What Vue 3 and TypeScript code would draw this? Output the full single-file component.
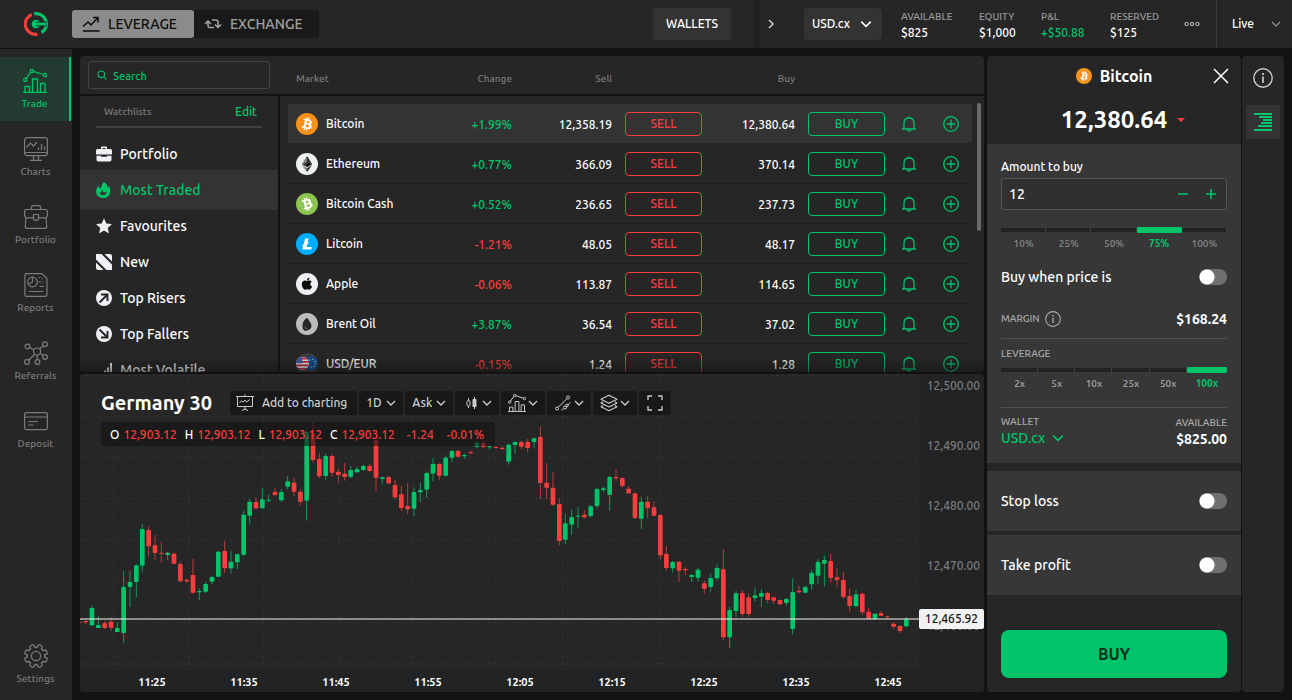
<script setup lang="ts">
import { ref } from 'vue'

interface Market {
  name: string
  icon: string
  change: string
  sell: string
  buy: string
}

const nav = [
  { label: 'Trade', icon: 'i-trade' },
  { label: 'Charts', icon: 'i-charts' },
  { label: 'Portfolio', icon: 'i-case' },
  { label: 'Reports', icon: 'i-reports' },
  { label: 'Referrals', icon: 'i-referrals' },
  { label: 'Deposit', icon: 'i-deposit' },
]
const activeNav = ref('Trade')

const stats = [
  { label: 'AVAILABLE', value: '$825' },
  { label: 'EQUITY', value: '$1,000' },
  { label: 'P&L', value: '+$50.88', up: true },
  { label: 'RESERVED', value: '$125' },
]

const watchlists = [
  { label: 'Portfolio', icon: 'w-case' },
  { label: 'Most Traded', icon: 'w-fire' },
  { label: 'Favourites', icon: 'w-star' },
  { label: 'New', icon: 'w-new' },
  { label: 'Top Risers', icon: 'w-up' },
  { label: 'Top Fallers', icon: 'w-down' },
  { label: 'Most Volatile', icon: 'w-bars' },
]
const activeList = ref('Most Traded')

const markets: Market[] = [
  { name: 'Bitcoin', icon: 'c-btc', change: '+1.99%', sell: '12,358.19', buy: '12,380.64' },
  { name: 'Ethereum', icon: 'c-eth', change: '+0.77%', sell: '366.09', buy: '370.14' },
  { name: 'Bitcoin Cash', icon: 'c-bch', change: '+0.52%', sell: '236.65', buy: '237.73' },
  { name: 'Litcoin', icon: 'c-ltc', change: '-1.21%', sell: '48.05', buy: '48.17' },
  { name: 'Apple', icon: 'c-apple', change: '-0.06%', sell: '113.87', buy: '114.65' },
  { name: 'Brent Oil', icon: 'c-oil', change: '+3.87%', sell: '36.54', buy: '37.02' },
  { name: 'USD/EUR', icon: 'c-fx', change: '-0.15%', sell: '1.24', buy: '1.28' },
]
const activeMarket = ref('Bitcoin')

const tools = [
  { label: 'Chart type', icon: 't-candles' },
  { label: 'Indicators', icon: 't-indicators' },
  { label: 'Drawing tools', icon: 't-draw' },
  { label: 'Layers', icon: 't-layers' },
]

const quotes = [
  { key: 'O', value: '12,903.12' },
  { key: 'H', value: '12,903.12' },
  { key: 'L', value: '12,903.12' },
  { key: 'C', value: '12,903.12' },
]

const times = ['11:25', '11:35', '11:45', '11:55', '12:05', '12:15', '12:25', '12:35', '12:45']
const prices = ['12,500.00', '12,490.00', '12,480.00', '12,470.00', '12,460.00']

const gridX = [102, 326, 551, 775, 1000, 1224, 1448, 1741]
const gridY = [15, 139, 263, 386, 510, 634, 758, 881]

// Each entry: direction, high, body top, body bottom, low
const series = `
r750,753,757,762 g706,714,766,768 g738,765,774,774 r752,760,774,777 r743,755,773,783 g757,774,786,786
g603,651,789,820 g603,636,651,711 g583,586,636,682 g462,477,587,605 r468,480,529,560 r495,526,549,571
r515,548,551,578 g545,548,555,570 r548,551,581,583 r575,582,633,638 r625,630,634,639 r567,615,668,671
g655,663,667,690 g636,642,665,669 g618,621,635,642 g542,545,620,621 r513,543,595,609 g544,575,595,611
g550,553,577,597 g421,434,555,557 g387,395,437,461 r383,396,415,417 g353,388,415,416 g374,389,392,396
r353,366,375,377 g357,366,391,395 g318,334,350,358 r323,338,365,378 r358,365,395,407 g181,186,392,452
r156,190,270,278 r248,267,319,325 g250,258,318,329 r252,258,308,320 r295,305,315,338 r279,311,321,332
g288,300,321,325 g290,297,307,308 g284,288,300,303 r282,288,303,305 r205,211,323,365 g319,322,327,343
r318,321,340,342 r330,345,382,388 r348,373,414,423 r339,408,418,432 g352,366,416,438 g338,360,367,396
g304,309,359,383 g265,282,311,333 r278,282,317,330 g256,263,317,321 g241,243,263,277 r239,243,260,262
g251,255,259,266 r242,246,250,251 g213,218,230,234 r212,218,231,233 g224,229,232,239 r228,231,234,236
r229,233,237,240 g221,224,275,284 g214,216,225,251 r212,216,230,237 r207,216,234,246 g203,205,216,235
r169,201,339,387 r279,338,353,387 r306,353,404,408 r384,402,513,526 g430,460,509,522 g418,441,464,494
g411,437,440,474 r420,434,442,446 g405,409,438,443 g353,357,408,415 g350,355,360,368 g318,321,375,422
r299,321,325,333 r321,324,348,353 r348,356,370,372 r368,370,444,447 g380,395,446,477 r378,395,414,446
r393,412,437,439 r433,435,556,569 r527,552,594,603 g573,576,595,607 r573,575,602,636 r592,597,601,616
g612,615,621,636 g594,599,623,633 r632,640,656,671 g611,624,651,665 g583,594,625,631 r537,598,802,811
g710,720,802,834 g663,670,723,741 r660,669,732,740 r670,682,732,740 g652,676,684,694 g657,669,680,711
r665,669,690,700 r681,682,692,701 r688,690,703,705 g684,687,699,708 g625,666,777,794 r647,662,667,670
g648,651,668,671 g600,608,643,659 g567,576,617,641 g558,570,581,651 r551,573,624,638 r594,622,630,652
r606,630,681,686 r655,678,708,725 g659,673,709,711 r669,671,727,734 r712,725,746,748 g729,731,747,749
r723,730,737,738 r737,739,741,747 r757,761,770,777 r766,768,783,789 g741,748,769,773`

const candles = series
  .trim()
  .split(/\s+/)
  .map((entry, i) => {
    const [high, top, bottom, low] = entry.slice(1).split(',').map(Number)
    return { x: Math.round(17 + i * 18.94), high, top, bottom, low, up: entry[0] === 'g' }
  })

const amount = ref('12')
const step = (by: number) => {
  amount.value = String(Math.max(0, Number(amount.value) + by))
}
const percents = ['10%', '25%', '50%', '75%', '100%']
const percent = ref('75%')
const leverages = ['2x', '5x', '10x', '25x', '50x', '100x']
const leverage = ref('100x')
const atPrice = ref(false)
const stopLoss = ref(false)
const takeProfit = ref(false)
</script>

<template>
  <svg class="defs" aria-hidden="true">
    <symbol id="chev" viewBox="0 0 10 10"><path d="M1 3l4 4 4-4" fill="none" stroke="currentColor" stroke-width="1.3" /></symbol>
    <symbol id="i-trade" viewBox="0 0 24 24">
      <g fill="none" stroke="currentColor" stroke-width="1.3">
        <path d="M0 23.4h24M2 23v-5.500h4.500v5.500M9.500 23V10h5v13M17.500 23v-8.500h4.500v8.500M3.400 9.400L7.700 3M10.400 2.300l10 3.200" />
        <circle cx="2.300" cy="10.800" r="1.600" /><circle cx="8.900" cy="1.900" r="1.600" /><circle cx="22" cy="6" r="1.600" />
      </g>
    </symbol>
    <symbol id="i-charts" viewBox="0 0 24 24">
      <g fill="none" stroke="currentColor" stroke-width="1.200">
        <rect x=".6" y=".6" width="22.800" height="18" rx="2.500" /><path d="M.6 15.500h22.800M9.500 18.600v4.600M14.500 18.600v4.600M6 23.400h12M2.500 10.500L6.500 6l3 3L13 5M14.500 13v-2.500M17.500 13V7M20.500 13V9.500" />
      </g>
    </symbol>
    <symbol id="i-case" viewBox="0 0 24 24">
      <g fill="none" stroke="currentColor" stroke-width="1.200">
        <path d="M7.500 4.500V2.200Q7.500.6 9.200.6h5.600q1.700 0 1.700 1.600v2.300" />
        <path d="M9.500 12.800H2.600Q.6 12.500.6 10.500V6.500q0-2 2-2h18.800q2 0 2 2v4q0 2-2 2.300h-6.900" />
        <path d="M2 13l-.8 8.500q0 1.900 1.900 1.900h17.800q1.900 0 1.900-1.900L22 13" />
        <path d="M9.500 9.500h5v3.200q0 2.600-2.500 2.600t-2.500-2.600z" />
      </g>
    </symbol>
    <symbol id="i-reports" viewBox="0 0 24 24">
      <g fill="none" stroke="currentColor" stroke-width="1.200">
        <path d="M2 .6h16L23 5.500v16q0 1.900-1.900 1.900H2.500Q.9 23.400.9 21.500V2.200Q.9.600 2 .6z" /><circle cx="8.500" cy="9" r="4.800" />
        <path d="M8.500 4.500V9l-4 2M14.500 4.500h2M18 5.500h1M14.500 9h2.500M18 9h1M15.500 13.500H20M5 18.500h14" />
      </g>
    </symbol>
    <symbol id="i-referrals" viewBox="0 0 24 24">
      <g fill="none" stroke="currentColor" stroke-width="1.200">
        <circle cx="13" cy="10.500" r="3.500" /><circle cx="3.500" cy="5.500" r="2.400" /><circle cx="21" cy="3.200" r="2.400" /><circle cx="21" cy="16" r="2.400" /><circle cx="3" cy="21" r="2.400" /><circle cx="13.500" cy="21" r="2.400" />
        <path d="M5.700 6.600l4.100 2.300M15.500 8l3.900-3.200M16.200 12.200l2.800 2.300M10.800 13.200l-6.200 6M13.300 14v4.600" />
      </g>
    </symbol>
    <symbol id="i-deposit" viewBox="0 0 24 24">
      <g fill="none" stroke="currentColor" stroke-width="1.200"><rect x=".6" y="3.600" width="22.800" height="17" rx="1.500" /><path d="M.6 8h22.800M4.500 12.500h9.500M4.500 16h5" /></g>
    </symbol>
    <symbol id="i-gear" viewBox="0 0 24 24">
      <g fill="none" stroke="currentColor" stroke-width="1.300" stroke-linejoin="round">
        <circle cx="12" cy="12" r="4.600" />
        <path d="M8.500.9h1.200l1.300 2.600h2L14.300.9h1.900l1.900 1.400-.6 2.700 1.400 1.500 3-.3 1.300 2.100-.1 1.500-2.600 1.100v2.200l2.600 1.100.1 1.500-1.300 2.100-3-.3-1.400 1.500.6 2.700-1.900 1.400h-1.900L13 20.500h-2l-1.300 2.600H7.800l-1.900-1.400.6-2.700-1.400-1.500-3 .3L.9 15.700V14.200l2.500-1.100v-2.200L.9 9.800V8.300l1.200-2.100 3 .3 1.400-1.500-.6-2.700z" />
      </g>
    </symbol>
    <symbol id="w-case" viewBox="0 0 16 16"><path d="M5 3V1.500Q5 .5 6 .5h4q1 0 1 1V3h3.500Q16 3 16 4.500v4H0v-4Q0 3 1.500 3zM6.500 3h3V2h-3zM.5 9.700h4.700v1h5.600v-1h4.700v4q0 1.800-1.800 1.800H2.300q-1.800 0-1.800-1.800z" fill="currentColor" /></symbol>
    <symbol id="w-fire" viewBox="0 0 16 16"><path d="M8 0q4 2.500 3.200 6 1 0 1.300-2 2 2 1.800 5.200Q13.800 16 7.200 16 .3 16 0 9.500 0 6 2.800 3.500q0 2.500 1.500 3Q4.700 6.500 5 5.500 5.200 2 8 0zM3.500 10q.2 3.200 3.700 3.200t3.600-3.600q-.8 1-2 .9Q6 10.500 7 7.800 5 8.500 5.200 10.500q-.9.300-1.700-.5z" fill="currentColor" /></symbol>
    <symbol id="w-star" viewBox="0 0 16 16"><path d="M8 .3l2.300 5.200 5.700.6-4.300 3.800 1.300 5.600L8 12.600l-5 2.900 1.300-5.600L0 6.100l5.700-.6z" fill="currentColor" /></symbol>
    <symbol id="w-new" viewBox="0 0 16 16"><path d="M0 0h5.500L16 10.500V16h-5.500L0 5.500zM8.500 0H14q2 0 2 2v5.500zM0 8.500L7.500 16H2q-2 0-2-2z" fill="currentColor" /></symbol>
    <symbol id="w-up" viewBox="0 0 16 16"><circle cx="8" cy="8" r="8" fill="currentColor" /><path d="M3.500 12.500l7-7M5 4.500h6.500V11" stroke="#262626" stroke-width="1.900" fill="none" /></symbol>
    <symbol id="w-down" viewBox="0 0 16 16"><circle cx="8" cy="8" r="8" fill="currentColor" /><path d="M3.500 3.500l7 7M11.500 5v6.500H5" stroke="#262626" stroke-width="1.900" fill="none" /></symbol>
    <symbol id="w-bars" viewBox="0 0 16 16"><path d="M8 15V8.500h2V15zM11 15V5.500h2V15zM14 15V1h2v14z" fill="currentColor" /></symbol>
    <symbol id="btc-b" viewBox="0 0 32 32"><path d="M23.189 14.020c.314-2.096-1.283-3.223-3.465-3.975l.708-2.840-1.728-.43-.69 2.765c-.454-.114-.92-.22-1.385-.326l.695-2.783L15.596 6l-.708 2.839c-.376-.086-.746-.17-1.104-.26l.002-.009-2.384-.595-.46 1.846s1.283.294 1.256.312c.7.175.826.638.805 1.006l-.806 3.235c.048.012.11.030.18.057l-.183-.045-1.130 4.532c-.086.212-.303.531-.793.410.018.025-1.256-.313-1.256-.313l-.858 1.978 2.250.561c.418.105.828.215 1.231.318l-.715 2.872 1.727.43.708-2.840c.472.127.930.245 1.378.357l-.706 2.828 1.728.43.715-2.866c2.948.558 5.164.333 6.097-2.333.752-2.146-.037-3.385-1.588-4.192 1.130-.26 1.980-1.003 2.207-2.538zm-3.950 5.538c-.533 2.147-4.148.986-5.320.695l.950-3.805c1.172.293 4.929.872 4.370 3.110zm.535-5.569c-.487 1.953-3.495.96-4.470.717l.860-3.450c.975.243 4.118.696 3.610 2.733z" fill="#fff" /></symbol>
    <symbol id="c-btc" viewBox="0 0 32 32"><circle cx="16" cy="16" r="16" fill="#f7931a" /><use href="#btc-b" width="32" height="32" /></symbol>
    <symbol id="c-bch" viewBox="0 0 32 32"><circle cx="16" cy="16" r="16" fill="#8dc351" /><g transform="rotate(-28 16 16)"><use href="#btc-b" width="32" height="32" /></g></symbol>
    <symbol id="c-eth" viewBox="0 0 32 32">
      <circle cx="16" cy="16" r="16" fill="#ecf0f1" />
      <path d="M16 4v8.900l7.500 3.300z" fill="#2f3030" /><path d="M16 4L8.500 16.200l7.500-3.300z" fill="#828384" /><path d="M16 22v6l7.500-10.400z" fill="#2f3030" /><path d="M16 28v-6l-7.500-4.400z" fill="#828384" /><path d="M16 20.600l7.500-4.400-7.500-3.300z" fill="#131313" /><path d="M8.500 16.200l7.500 4.400v-7.700z" fill="#393939" />
    </symbol>
    <symbol id="c-ltc" viewBox="0 0 32 32"><circle cx="16" cy="16" r="16" fill="#00aeff" /><path d="M10.427 19.214L9 19.768l.688-2.759 1.444-.58L13.213 8h5.129l-1.519 6.196 1.410-.571-.68 2.750-1.427.571-.848 3.483H23L22.127 24H9.252z" fill="#fff" /></symbol>
    <symbol id="c-apple" viewBox="0 0 32 32"><circle cx="16" cy="16" r="16" fill="#eff0f4" /><path transform="translate(8.300 5.500) scale(.0395)" d="M318.700 268.700c-.2-36.700 16.400-64.400 50-84.800-18.800-26.900-47.200-41.700-84.700-44.600-35.500-2.800-74.300 20.700-88.500 20.700-15 0-49.400-19.700-76.400-19.700C63.300 141.200 4 184.800 4 273.500q0 39.300 14.400 81.200c12.800 36.700 59 126.700 107.200 125.200 25.200-.6 43-17.900 75.800-17.900 31.800 0 48.300 17.900 76.400 17.900 48.600-.7 90.400-82.500 102.600-119.300-65.200-30.700-61.700-90-61.700-91.900zm-56.600-164.200c27.300-32.400 24.800-61.900 24-72.500-24.100 1.400-52 16.400-67.900 34.900-17.500 19.800-27.800 44.300-25.600 71.900 26.100 2 49.900-11.400 69.500-34.300z" fill="#0a0a0a" /></symbol>
    <symbol id="c-oil" viewBox="0 0 32 32"><circle cx="16" cy="16" r="16" fill="#bcbcbc" /><path d="M16 7q7 8.500 6.500 12.500T16 25.500t-6.500-6T16 7z" fill="#262626" /><path d="M13 20q.5 2.500 3 3" stroke="#999" fill="none" /></symbol>
    <symbol id="c-fx" viewBox="0 0 32 32">
      <circle cx="16" cy="16" r="16" fill="#3c3c3e" />
      <circle cx="22" cy="15" r="10" fill="#0b4ea2" /><circle cx="23" cy="15" r="5.500" fill="none" stroke="#ffd83b" stroke-width="1.600" stroke-dasharray="1.600 2.700" />
      <clipPath id="us-clip"><circle cx="9.500" cy="15" r="9.500" /></clipPath>
      <g clip-path="url(#us-clip)"><path d="M0 5h19v20H0z" fill="#eee" /><path d="M0 8h19M0 13h19M0 18h19M0 23h19" stroke="#c8203c" stroke-width="2.600" /><path d="M0 5h9v10H0z" fill="#3b5ba5" /></g>
    </symbol>
    <symbol id="bell" viewBox="0 0 16 16"><g fill="none" stroke="currentColor" stroke-width="1.300"><path d="M1 13h14M3 12.800V7q0-5 5-5t5 5v5.800M8 2V.3" /><path d="M5.800 13.600q2.200 3 4.400 0" /></g></symbol>
    <symbol id="plus" viewBox="0 0 16 16"><g fill="none" stroke="currentColor" stroke-width="1.300"><circle cx="8" cy="8" r="7.300" /><path d="M8 3.700v8.600M3.700 8h8.600" /></g></symbol>
    <symbol id="t-candles" viewBox="0 0 18 18"><path d="M6.500 4v10M12.500 3v12" stroke="currentColor" fill="none" /><rect x="5" y="6.500" width="3" height="5.500" rx="1.200" fill="#191919" stroke="currentColor" /><rect x="10.500" y="5" width="4" height="8" rx=".8" fill="currentColor" /></symbol>
    <symbol id="t-indicators" viewBox="0 0 24 24"><use href="#i-trade" width="24" height="24" /></symbol>
    <symbol id="t-draw" viewBox="-1 -1 18 18"><g fill="none" stroke="currentColor" stroke-width="1"><circle cx="2" cy="13.500" r="1.500" /><circle cx="13" cy="2.500" r="1.500" /><path d="M3.100 12.400L11.900 3.600M6.500 15.500l2-2.200M12.600 10.200L15.500 7.500" /><circle cx="10" cy="12.500" r="1.500" /><circle cx="12" cy="10.500" r="1.300" /></g></symbol>
    <symbol id="t-layers" viewBox="0 0 18 18"><g fill="none" stroke="currentColor" stroke-width="1.100" stroke-linejoin="round"><path d="M9 1.200l8 4-8 4-8-4z" /><path d="M3.200 7.800L1 9l8 4 8-4-2.200-1.200" /><path d="M3.200 11.600L1 12.800l8 4 8-4-2.200-1.200" /></g></symbol>
    <symbol id="info" viewBox="0 0 20 20"><g fill="none" stroke="currentColor" stroke-width="1.400"><circle cx="10" cy="10" r="9.200" /><path d="M10 8.500V15M10 5v2" stroke-width="1.700" /></g></symbol>
  </svg>

  <div class="app">
    <header class="top">
      <a class="logo" href="#" aria-label="Home">
        <svg viewBox="0 0 24 24" width="24" height="24" fill="none">
          <path d="M7.800 2.500A10.300 10.300 0 0 0 13.500 22.200" stroke="#fa3d3d" stroke-width="3.200" />
          <path d="M10.200 1.800A10.300 10.300 0 0 1 17.500 20.700" stroke="#00c46a" stroke-width="3.200" />
          <circle cx="12" cy="12" r="4.300" fill="#00c46a" />
          <path d="M12 12h11" stroke="#262626" stroke-width="4.600" />
          <path d="M10 12h12.500" stroke="#00c46a" stroke-width="2.800" />
        </svg>
      </a>
      <nav class="modes" aria-label="Mode">
        <button class="mode on" type="button">
          <svg viewBox="0 0 18 16" width="18" height="16" fill="none" stroke="currentColor" stroke-width="1.500"><path d="M1 10.500l5-4.500 3 3 6.500-7M11 1.500h5v5M1 15h16.500" /></svg>
          LEVERAGE
        </button>
        <button class="mode" type="button">
          <svg viewBox="0 0 18 16" width="18" height="16" fill="none" stroke="currentColor" stroke-width="1.500"><path d="M1 8l3-3 3 3M4 5.500v4q0 2 2 2h4M8 4h4q2 0 2 2v4.500M11 8.500l3 3 3-3" /></svg>
          EXCHANGE
        </button>
      </nav>
      <button class="wallets" type="button">WALLETS</button>
      <div class="account">
        <button class="plain" type="button" aria-label="Collapse">
          <svg viewBox="0 0 8 10" width="8" height="10" fill="none" stroke="currentColor" stroke-width="1.400"><path d="M2 1l4 4-4 4" /></svg>
        </button>
        <label class="pick wallet">
          <select aria-label="Wallet"><option>USD.cx</option></select>
          <svg width="12" height="12"><use href="#chev" /></svg>
        </label>
        <dl class="stats">
          <div v-for="s in stats" :key="s.label">
            <dt>{{ s.label }}</dt>
            <dd :class="{ up: s.up }">{{ s.value }}</dd>
          </div>
        </dl>
        <button class="plain more" type="button" aria-label="More">
          <svg viewBox="0 0 16 6" width="16" height="6" fill="none" stroke="currentColor"><circle cx="2.500" cy="3" r="1.700" /><circle cx="8" cy="3" r="1.700" /><circle cx="13.500" cy="3" r="1.700" /></svg>
        </button>
      </div>
      <label class="pick live">
        <select aria-label="Account mode"><option>Live</option></select>
        <svg width="10" height="10"><use href="#chev" /></svg>
      </label>
    </header>

    <div class="body">
      <nav class="rail" aria-label="Main">
        <a v-for="n in nav" :key="n.label" href="#" :class="['rail-item', { on: n.label === activeNav }]" @click.prevent="activeNav = n.label">
          <svg width="24" height="24"><use :href="'#' + n.icon" /></svg>
          <span>{{ n.label }}</span>
        </a>
        <a href="#" class="rail-item last">
          <svg width="24" height="24"><use href="#i-gear" /></svg>
          <span>Settings</span>
        </a>
      </nav>

      <main class="center">
        <section class="markets">
          <div class="lists">
            <div class="search-bar">
              <label class="search">
                <svg viewBox="0 0 10 10" width="10" height="10" fill="none" stroke="currentColor" stroke-width="1.100"><circle cx="4.300" cy="4.300" r="3.300" /><path d="M6.700 6.700L9.300 9.300" /></svg>
                <input type="text" placeholder="Search" aria-label="Search markets" />
              </label>
            </div>
            <div class="watch">
              <div class="watch-head">
                <span>Watchlists</span>
                <button type="button">Edit</button>
              </div>
              <ul>
                <li v-for="w in watchlists" :key="w.label">
                  <button type="button" :class="{ on: w.label === activeList }" @click="activeList = w.label">
                    <svg width="16" height="16"><use :href="'#' + w.icon" /></svg>
                    {{ w.label }}
                  </button>
                </li>
              </ul>
            </div>
          </div>
          <div class="quotes">
            <table>
              <colgroup>
                <col /><col class="w-change" /><col class="w-sell" /><col class="w-sellbtn" /><col class="w-buy" /><col class="w-buybtn" /><col class="w-icon" /><col class="w-icon" />
              </colgroup>
              <thead>
                <tr>
                  <th class="name">Market</th><th>Change</th><th>Sell</th><td></td><th>Buy</th><td></td><td></td><td></td>
                </tr>
              </thead>
              <tbody>
                <tr v-for="m in markets" :key="m.name" :class="{ on: m.name === activeMarket }" @click="activeMarket = m.name">
                  <td class="name">
                    <div><svg width="22" height="22"><use :href="'#' + m.icon" /></svg>{{ m.name }}</div>
                  </td>
                  <td :class="m.change[0] === '+' ? 'up' : 'down'">{{ m.change }}</td>
                  <td>{{ m.sell }}</td>
                  <td class="act"><button class="deal sell" type="button">SELL</button></td>
                  <td>{{ m.buy }}</td>
                  <td class="act"><button class="deal buy" type="button">BUY</button></td>
                  <td class="ico"><button type="button" :aria-label="'Alert for ' + m.name"><svg width="16" height="16"><use href="#bell" /></svg></button></td>
                  <td class="ico"><button type="button" :aria-label="'Add ' + m.name"><svg width="16" height="16"><use href="#plus" /></svg></button></td>
                </tr>
              </tbody>
            </table>
            <i class="thumb"></i>
          </div>
          <div class="fade"></div>
        </section>

        <section class="chart">
          <svg class="plot" viewBox="0 12 2517 888" preserveAspectRatio="none" role="img" aria-label="Germany 30 price">
            <g class="grid">
              <path v-for="x in gridX" :key="'x' + x" :d="`M${x} 12V900`" />
              <path v-for="y in gridY" :key="'y' + y" :d="`M0 ${y}H2517`" />
            </g>
            <path class="down" d="M0 757h5" />
            <g v-for="c in candles" :key="c.x" :class="c.up ? 'up' : 'down'">
              <path :d="`M${c.x} ${c.high}V${c.low}`" />
              <rect :x="c.x - 7" :y="c.top" width="14" :height="c.bottom - c.top" rx="2" />
            </g>
            <path class="now" d="M0 747H2517" />
          </svg>
          <div class="y-axis">
            <span v-for="p in prices" :key="p">{{ p }}</span>
            <output class="tag">12,465.92</output>
          </div>
          <div class="x-axis">
            <span v-for="t in times" :key="t">{{ t }}</span>
          </div>
          <div class="overlay">
            <div class="tools">
              <h1>Germany 30</h1>
              <button type="button" class="tool add">
                <svg viewBox="0 0 18 18" width="18" height="18" fill="none" stroke="currentColor"><path d="M1.500 2.500h15v10h-15zM0 2.500h18M9 12.500v3M6 16.500l3-1.500 3 1.500M9 .5v2M3.500 8.500l2-1.500 1.500 1 2-2 1.500 2 3.500-2.500" /></svg>
                Add to charting
              </button>
              <label class="pick tool"><select aria-label="Interval"><option>1D</option></select><svg width="10" height="10"><use href="#chev" /></svg></label>
              <label class="pick tool"><select aria-label="Price side"><option>Ask</option></select><svg width="10" height="10"><use href="#chev" /></svg></label>
              <button v-for="t in tools" :key="t.label" type="button" class="tool icon" :aria-label="t.label">
                <svg width="18" height="18"><use :href="'#' + t.icon" /></svg>
                <svg width="10" height="10"><use href="#chev" /></svg>
              </button>
              <button type="button" class="tool full" aria-label="Full screen">
                <svg viewBox="0 0 16 16" width="16" height="16" fill="none" stroke="currentColor" stroke-width="1.300"><path d="M1 5V1h4M11 1h4v4M15 11v4h-4M5 15H1v-4" /></svg>
              </button>
            </div>
            <dl class="ohlc">
              <div v-for="q in quotes" :key="q.key"><dt>{{ q.key }}</dt><dd>{{ q.value }}</dd></div>
              <div class="delta"><dd>-1.24</dd><dd>-0.01%</dd></div>
            </dl>
          </div>
        </section>
      </main>

      <aside class="order">
        <div class="head">
          <h2><svg width="16" height="16"><use href="#c-btc" /></svg>Bitcoin</h2>
          <button class="close" type="button" aria-label="Close">
            <svg viewBox="0 0 16 16" width="16" height="16" fill="none" stroke="currentColor" stroke-width="1.500"><path d="M1 1l14 14M15 1L1 15" /></svg>
          </button>
          <p class="price"><strong>12,380.64</strong><svg viewBox="0 0 8 4" width="8" height="4"><path d="M0 0h8L4 4z" fill="#fa3d3d" /></svg></p>
        </div>

        <form class="block main" @submit.prevent>
          <label class="caption" for="amount">Amount to buy</label>
          <div class="amount">
            <input id="amount" v-model="amount" type="text" inputmode="numeric" />
            <button type="button" aria-label="Less" @click="step(-1)"><svg viewBox="0 0 10 10" width="10" height="10"><path d="M0 5h10" stroke="currentColor" stroke-width="1.600" /></svg></button>
            <button type="button" aria-label="More" @click="step(1)"><svg viewBox="0 0 10 10" width="10" height="10"><path d="M0 5h10M5 0v10" stroke="currentColor" stroke-width="1.600" /></svg></button>
          </div>
          <div class="steps five" role="radiogroup" aria-label="Share of balance">
            <label v-for="p in percents" :key="p"><input v-model="percent" type="radio" name="percent" :value="p" /><span>{{ p }}</span></label>
          </div>
          <label class="row when">Buy when price is<input v-model="atPrice" class="toggle" type="checkbox" /></label>
          <div class="row margin">
            <span class="tiny">MARGIN <svg width="16" height="16"><use href="#info" /></svg></span>
            <strong>$168.24</strong>
          </div>
          <p class="tiny lev">LEVERAGE</p>
          <div class="steps six" role="radiogroup" aria-label="Leverage">
            <label v-for="l in leverages" :key="l"><input v-model="leverage" type="radio" name="leverage" :value="l" /><span>{{ l }}</span></label>
          </div>
          <div class="row funds">
            <div>
              <span class="tiny">WALLET</span>
              <label class="pick"><select aria-label="Paying wallet"><option>USD.cx</option></select><svg width="12" height="12"><use href="#chev" /></svg></label>
            </div>
            <div class="right"><span class="tiny">AVAILABLE</span><strong>$825.00</strong></div>
          </div>
        </form>
        <label class="block row extra first">Stop loss<input v-model="stopLoss" class="toggle" type="checkbox" /></label>
        <label class="block row extra">Take profit<input v-model="takeProfit" class="toggle" type="checkbox" /></label>
        <button class="submit" type="button">BUY</button>
      </aside>

      <div class="side">
        <button type="button" aria-label="Info"><svg width="20" height="20"><use href="#info" /></svg></button>
        <button type="button" class="on" aria-label="Order panel">
          <svg viewBox="0 0 18 18" width="18" height="18" stroke="currentColor" stroke-width="2"><path d="M0 1h18M5 4h13M9 7h9M7 10h11M4 13h14M0 17h18" /></svg>
        </button>
      </div>
    </div>
  </div>
</template>

<style>
body {
  background: #121212;
}
</style>

<style scoped>
* {
  box-sizing: border-box;
}
.app {
  --green: #00c46a;
  --red: #fa3d3d;
  --panel: #262626;
  --dark: #121212;
  display: flex;
  flex-direction: column;
  height: 100vh;
  min-height: 680px;
  background: var(--dark);
  color: #fff;
  font: 500 12px/16px Ubuntu, "Open Sans", "Noto Sans", sans-serif;
}
button,
input,
select {
  margin: 0;
  padding: 0;
  border: 0;
  background: none;
  color: inherit;
  font: inherit;
}
button,
select {
  cursor: pointer;
}
input:focus {
  outline: none;
}
a {
  color: inherit;
  text-decoration: none;
}
svg {
  display: block;
  flex: none;
}
.defs {
  position: absolute;
  width: 0;
  height: 0;
}
dl,
dd,
ul,
p,
h1,
h2 {
  margin: 0;
  padding: 0;
  list-style: none;
}
.up {
  color: var(--green);
}
.down {
  color: var(--red);
}
.pick {
  display: inline-grid;
  align-items: center;
}
.pick > * {
  grid-area: 1 / 1;
}
.pick svg {
  justify-self: end;
  pointer-events: none;
}
.pick select {
  appearance: none;
  width: 100%;
}

.top {
  display: flex;
  align-items: center;
  height: 48px;
  flex: none;
  background: var(--panel);
}
.logo {
  display: grid;
  place-items: center;
  width: 72px;
}
.modes {
  display: flex;
  border-radius: 3px;
  background: #191919;
}
.mode {
  display: flex;
  align-items: center;
  gap: 8px;
  height: 28px;
  padding: 0 17px 0 10px;
  border-radius: 3px;
  color: #a3a3a3;
  font-size: 14px;
}
.mode.on {
  background: #8b8b8b;
  color: #0c0c0c;
}
.wallets {
  height: 32px;
  width: 78px;
  margin-left: auto;
  border-radius: 4px;
  background: #333;
}
.account {
  display: flex;
  align-items: center;
  height: 48px;
  margin-left: 24px;
  padding-left: 12px;
  background: linear-gradient(90deg, #1d1d1d, #262626 8px);
}
.plain {
  color: #ddd;
}
.wallet {
  width: 78px;
  height: 32px;
  margin-left: 29px;
  padding: 0 10px 0 8px;
  border-radius: 4px;
  background: #333;
}
.stats {
  display: grid;
  grid-template-columns: 78px 62px 69px 74px;
  margin-left: 19px;
  padding-top: 2px;
}
.stats dt {
  color: #9a9a9a;
  font-size: 10px;
}
.more {
  color: #ccc;
}
.live {
  width: 76px;
  height: 48px;
  margin-left: 16px;
  padding: 0 11px 0 15px;
  border-left: 1px solid #3d3d3d;
}
.live svg {
  color: #8b8b8b;
}

.body {
  display: flex;
  flex: 1;
  min-height: 0;
  padding: 1px 8px 0 0;
}
.rail {
  display: flex;
  flex-direction: column;
  gap: 4px;
  flex: none;
  width: 72px;
  padding: 8px 0 4px;
  background: var(--panel);
}
.rail-item {
  display: flex;
  flex-direction: column;
  align-items: center;
  gap: 3px;
  height: 64px;
  width: 71px;
  padding-top: 12px;
  color: #7b7b7b;
  font-size: 10px;
}
.rail-item.on {
  border-right: 2px solid var(--green);
  background: #223a2f;
  color: var(--green);
}
.rail-item.last {
  margin-top: auto;
}

.center {
  display: flex;
  flex-direction: column;
  flex: 1;
  gap: 2px;
  min-width: 0;
  padding: 7px 3px 8px 8px;
}
.markets {
  position: relative;
  display: flex;
  flex: none;
  height: 316px;
  overflow: hidden;
  border-radius: 4px;
}
.lists {
  flex: none;
  width: 200px;
}
.search-bar {
  height: 38px;
  padding: 5px 10px 0 8px;
  background: var(--panel);
}
.search {
  display: flex;
  align-items: center;
  gap: 6px;
  height: 28px;
  padding: 0 8px;
  border: 1px solid #444;
  border-radius: 3px;
  color: var(--green);
  font-size: 11px;
}
.search input {
  width: 100%;
  padding-top: 1px;
}
.search input::placeholder {
  color: inherit;
  opacity: 1;
}
.watch {
  height: 276px;
  margin: 2px 2px 0 0;
  background: var(--panel);
}
.watch-head {
  display: flex;
  align-items: center;
  justify-content: space-between;
  height: 32px;
  margin: 0 16px;
  padding: 2px 5px 0 8px;
  border-bottom: 2px solid #424242;
  color: #7b7b7b;
  font-size: 10px;
}
.watch-head button {
  color: var(--green);
  font-size: 12px;
}
.watch ul {
  padding-top: 8px;
}
.watch li {
  display: flex;
  align-items: center;
  height: 36px;
}
.watch li button {
  display: flex;
  align-items: center;
  flex: none;
  gap: 8px;
  width: 100%;
  height: 40px;
  padding-left: 16px;
  font-size: 14px;
}
.watch li svg {
  color: #eff0f4;
}
.watch li .on,
.watch li .on svg {
  color: var(--green);
}
.watch li .on {
  background: #333;
}
.quotes {
  position: relative;
  flex: 1;
  min-width: 0;
  padding: 0 12px 0 8px;
  background: linear-gradient(#262626 38px, #121212 38px, #121212 40px, #262626 40px);
}
table {
  width: 100%;
  table-layout: fixed;
  border-spacing: 0;
}
.w-change,
.w-sell {
  width: 100px;
}
.w-sellbtn {
  width: 87px;
}
.w-buy {
  width: 96px;
}
.w-buybtn {
  width: 85px;
}
.w-icon {
  width: 42px;
}
th,
td {
  padding: 2px 8px 0 0;
  text-align: right;
}
th {
  height: 40px;
  padding-top: 6px;
  color: #7b7b7b;
  font-size: 10px;
  font-weight: 500;
}
th.name {
  padding-left: 8px;
}
.name {
  padding: 0 0 0 8px;
  text-align: left;
}
th.name {
  padding-top: 6px;
}
.name div {
  display: flex;
  align-items: center;
  gap: 8px;
  white-space: nowrap;
}
tbody::before {
  display: block;
  height: 8px;
  content: "";
}
tbody td {
  height: 40px;
  border-bottom: 1px solid #1c1c1c;
}
tr.on td {
  background: #333;
  border-color: var(--panel);
  background-clip: padding-box;
}
.act {
  padding: 0 0 0 5px;
  text-align: left;
}
.deal {
  display: block;
  width: 77px;
  height: 24px;
  padding-top: 1px;
  border: 1px solid currentColor;
  border-radius: 4px;
}
.sell {
  color: var(--red);
}
.buy {
  color: var(--green);
}
.ico {
  padding: 0;
  color: var(--green);
}
.ico button {
  display: block;
  margin: 0 auto;
}
.thumb {
  position: absolute;
  top: 47px;
  right: 3px;
  width: 4px;
  height: 128px;
  border-radius: 2px;
  background: #6a6a6a;
}
.fade {
  position: absolute;
  inset: auto 0 0;
  height: 16px;
  background: linear-gradient(rgba(18, 18, 18, 0), rgba(18, 18, 18, 0.5));
  pointer-events: none;
}

.chart {
  position: relative;
  display: grid;
  grid-template: minmax(0, 1fr) 22px / minmax(0, 1fr) 65px;
  flex: 1;
  min-height: 0;
  overflow: hidden;
  border-radius: 4px;
  background: #222325;
}
.plot {
  width: 100%;
  height: 100%;
  background: var(--panel);
}
.plot path {
  fill: none;
  stroke: currentColor;
  stroke-width: 3;
  stroke-opacity: 0.75;
}
.plot rect {
  fill: currentColor;
}
.plot .grid path {
  stroke: #323232;
  stroke-width: 3;
  stroke-opacity: 1;
  stroke-dasharray: 9 9;
}
.plot .now {
  stroke: #fff;
  stroke-width: 5;
  stroke-opacity: 0.65;
}
.y-axis {
  position: relative;
  padding: 4px 4px 0 0;
  color: #7b7b7b;
  text-align: right;
}
.y-axis span {
  display: block;
  height: 60px;
}
.y-axis span:last-of-type {
  height: 16px;
}
.tag {
  position: absolute;
  top: 235px;
  left: 0;
  width: 65px;
  border-radius: 2px;
  background: #f1f1f1;
  color: #111;
  line-height: 20px;
  text-align: center;
}
.x-axis {
  display: grid;
  grid-column: 1 / -1;
  grid-template-columns: repeat(9, 1fr);
  padding: 4px 50px 0 26px;
  font-size: 11px;
  font-weight: 700;
  text-align: center;
}
.overlay {
  position: absolute;
  top: 17px;
  left: 21px;
}
.tools {
  display: flex;
  align-items: center;
  gap: 2px;
  height: 24px;
}
.tools h1 {
  width: 127px;
  font-size: 20px;
  font-weight: 700;
  line-height: 22px;
  white-space: nowrap;
}
.tool {
  display: flex;
  align-items: center;
  justify-content: space-between;
  height: 24px;
  padding: 0 7px;
  border-radius: 3px;
  background: rgba(18, 18, 18, 0.7);
  color: #ccc;
}
.pick.tool {
  display: inline-grid;
}
.pick.tool select {
  padding-right: 14px;
}
.add {
  gap: 8px;
  padding: 0 10px 0 6px;
}
.icon {
  width: 44px;
}
.full {
  width: 32px;
  padding: 0 8px;
}
.ohlc {
  display: inline-flex;
  align-items: center;
  gap: 8px;
  height: 24px;
  margin-top: 7px;
  padding: 2px 11px 0 9px;
  border-radius: 3px;
  background: rgba(18, 18, 18, 0.6);
}
.ohlc div {
  display: flex;
  gap: 4px;
}
.ohlc .delta {
  gap: 13px;
  padding-left: 4px;
}
.ohlc dd {
  color: var(--red);
}

.order {
  display: flex;
  flex-direction: column;
  flex: none;
  width: 254px;
  margin: 7px 1px 8px 0;
  border-radius: 4px;
  background: var(--panel);
  overflow: hidden;
}
.head {
  display: grid;
  grid-template: 40px 48px / 1fr auto 1fr;
  align-items: center;
}
.head h2 {
  display: flex;
  grid-column: 2;
  justify-self: center;
  align-items: center;
  gap: 8px;
  font-size: 16px;
  font-weight: 700;
}
.close {
  justify-self: end;
  margin-right: 12px;
}
.price {
  display: grid;
  grid-column: 1 / -1;
  grid-template-columns: 1fr auto 1fr;
  align-items: center;
  column-gap: 10px;
}
.price strong {
  grid-column: 2;
  font-size: 24px;
  line-height: 28px;
}
.block {
  background: #373737;
}
.main {
  padding: 14px 14px 16px;
}
.caption {
  display: block;
  height: 20px;
  line-height: 18px;
}
.amount {
  display: flex;
  align-items: center;
  gap: 18px;
  height: 32px;
  padding: 0 10px 0 7px;
  border: 1px solid #555;
  border-radius: 3px;
  background: #303030;
  color: var(--green);
}
.amount input {
  flex: 1;
  min-width: 0;
  color: #fff;
  font-size: 14px;
}
.steps {
  display: grid;
  color: #8b8b8b;
  font-size: 10px;
  text-align: center;
}
.five {
  grid-template-columns: repeat(5, 1fr);
  margin-top: 17px;
}
.six {
  grid-template-columns: repeat(5, 37fr) 40fr;
  margin-top: 5px;
  color: #aaa;
}
.steps input {
  display: block;
  appearance: none;
  width: 100%;
  height: 4px;
  margin: 1px 0 4px;
  border-right: 1px solid #3f3f3f;
  background: #222;
  cursor: pointer;
}
.steps input:checked {
  height: 6px;
  margin: 0 0 3px;
  border: 0;
  border-radius: 1px;
  background: var(--green);
}
.steps input:checked + span {
  color: var(--green);
  font-weight: 700;
}
.row {
  display: flex;
  align-items: center;
  justify-content: space-between;
}
.row strong {
  font-size: 14px;
}
.when {
  height: 34px;
  margin-top: 8px;
  font-size: 14px;
}
.toggle {
  appearance: none;
  width: 28px;
  height: 16px;
  border-radius: 8px;
  background: radial-gradient(circle at 8px 8px, #fff 7px, transparent 8px) #707070;
  cursor: pointer;
}
.toggle:checked {
  background: radial-gradient(circle at 20px 8px, #fff 7px, transparent 8px) var(--green);
}
.tiny {
  display: flex;
  align-items: center;
  gap: 5px;
  color: #aaa;
  font-size: 10px;
}
.margin {
  height: 39px;
  margin-top: 6px;
  border-bottom: 1px solid #505050;
}
.lev {
  margin-top: 7px;
}
.funds {
  margin-top: 15px;
  padding-top: 6px;
  border-top: 1px solid #505050;
}
.funds .pick {
  color: var(--green);
  font-size: 14px;
}
.funds select {
  padding-right: 18px;
}
.right {
  display: flex;
  flex-direction: column;
  align-items: flex-end;
}
.extra {
  height: 60px;
  margin-top: 4px;
  padding: 0 14px;
  font-size: 14px;
}
.extra.first {
  margin-top: 8px;
}
.submit {
  height: 48px;
  margin: auto 14px 14px;
  border-radius: 8px;
  background: var(--green);
  color: #06301c;
  font-size: 16px;
  font-weight: 700;
}
.side {
  display: flex;
  flex-direction: column;
  align-items: center;
  gap: 10px;
  flex: none;
  width: 42px;
  margin: 7px 0 8px;
  padding-top: 5px;
  border-radius: 4px;
  background: var(--panel);
}
.side button {
  display: grid;
  place-items: center;
  width: 34px;
  height: 34px;
  border-radius: 2px;
  color: #ccc;
}
.side .on {
  background: #333;
  color: var(--green);
}
</style>
